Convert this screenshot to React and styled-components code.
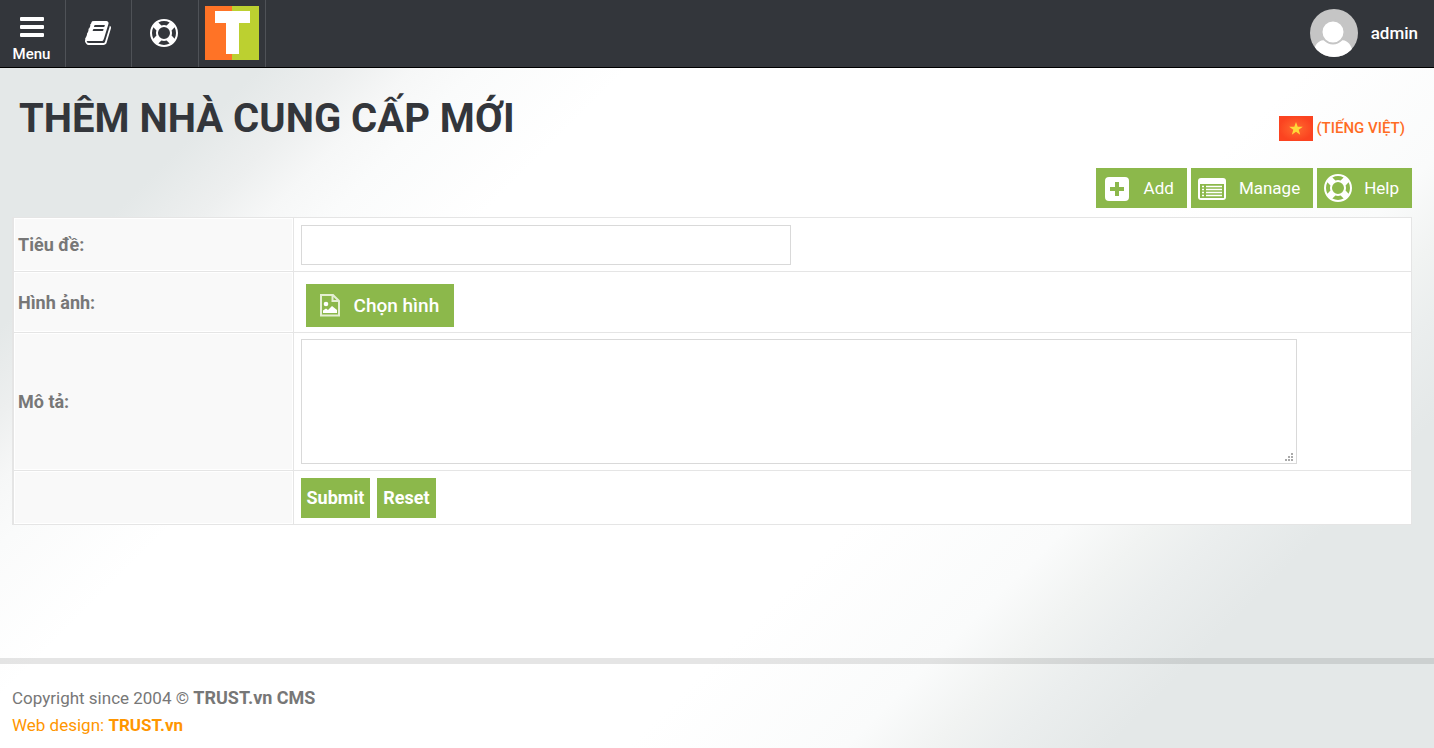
import styled, { createGlobalStyle } from 'styled-components';

const GlobalStyle = createGlobalStyle`
	* {
		box-sizing: border-box;
	}

	body {
		margin: 0;
		min-height: 100vh;
		font-family: Roboto, 'Liberation Sans', sans-serif;
		font-size: 17px;
		color: #777;
		background: linear-gradient(
			135deg,
			#e4e8e8 0%,
			#e4e8e8 15%,
			#edefef 19%,
			#f6f7f7 22%,
			#fafbfb 25%,
			#fff 32%,
			#fff 63%,
			#fafbfb 73%,
			#f1f3f2 77%,
			#ebeeee 80%,
			#e4e8e8 85%,
			#e4e8e8 100%
		);
	}
`;

const Page = styled.div`
	display: flex;
	flex-direction: column;
	min-height: 100vh;
`;

const TopBar = styled.header`
	display: flex;
	justify-content: space-between;
	height: 68px;
	background: #33363b;
	border-bottom: 1px solid #000;
`;

const Nav = styled.nav`
	display: flex;
`;

const NavLink = styled.a`
	display: flex;
	flex-direction: column;
	align-items: center;
	justify-content: ${({ $bottom }) => ($bottom ? 'flex-end' : 'center')};
	gap: 8px;
	width: ${({ $width = 67 }) => $width}px;
	padding: 0 2px ${({ $bottom }) => ($bottom ? 4 : 1)}px 0;
	border-right: 1px solid #4f5257;
	font-size: 15px;
	font-weight: 500;
	line-height: 18px;
	color: #fff;
	text-decoration: none;
`;

const LogoLink = styled(NavLink)`
	padding-right: 0;
`;

const Account = styled.a`
	display: flex;
	align-items: center;
	gap: 13px;
	padding: 0 16px 1px 0;
	font-weight: 500;
	color: #fff;
	text-decoration: none;
`;

const Main = styled.main`
	flex: 1;
	padding: 25px 22px 0 12px;
`;

const Heading = styled.div`
	display: flex;
	justify-content: space-between;
	align-items: center;
	height: 52px;
	padding: 0 7px;
`;

const Title = styled.h1`
	margin: 0;
	font-size: 40px;
	font-weight: 700;
	line-height: 52px;
	color: #33363b;
	text-transform: uppercase;
`;

const Language = styled.a`
	display: flex;
	align-items: center;
	gap: 3px;
	padding-top: 18px;
	font-size: 15px;
	font-weight: 500;
	line-height: 20px;
	color: #ff6c24;
	text-decoration: none;
`;

const Toolbar = styled.div`
	display: flex;
	justify-content: flex-end;
	gap: 4px;
	margin: 23px 0 9px;
`;

const ToolLink = styled.a`
	display: flex;
	align-items: center;
	gap: 12px;
	height: 40px;
	padding: 0 13px 0 7px;
	background: #8cb84b;
	color: #fff;
	text-decoration: none;
`;

const FormTable = styled.table`
	width: 100%;
	border-collapse: collapse;
	border: 1px solid #e5e5e5;
	background: #fff;
`;

const LabelCell = styled.th`
	width: 280px;
	padding: 0 4px;
	border: 1px solid #e5e5e5;
	border-left-width: 2px;
	background: #f9f9f9;
	box-shadow: inset 0 0 0 1px #fff;
	font-size: 18px;
	font-weight: 700;
	text-align: left;
`;

const FieldCell = styled.td`
	height: ${({ $height }) => $height}px;
	padding: ${({ $padding = '6px 3px 6px 7px' }) => $padding};
	border: 1px solid #e5e5e5;
`;

const TextInput = styled.input`
	display: block;
	width: 490px;
	max-width: 100%;
	height: 40px;
	padding: 4px 8px;
	border: 1px solid #d9d9d9;
	font: inherit;
`;

const TextArea = styled.textarea`
	display: block;
	width: 90%;
	height: 125px;
	padding: 4px 8px;
	border: 1px solid #d9d9d9;
	font: inherit;

	&::-webkit-resizer {
		background: url("data:image/svg+xml,%3Csvg xmlns='http://www.w3.org/2000/svg' width='15' height='15'%3E%3Cpath fill='%23aaa' d='M4 11h2v2H4zM7 11h2v2H7zM10 11h2v2h-2zM7 8h2v2H7zM10 8h2v2h-2zM10 5h2v2h-2z'/%3E%3C/svg%3E")
			no-repeat right bottom;
	}
`;

const ChooseButton = styled.button`
	display: flex;
	align-items: center;
	gap: 12px;
	height: 43px;
	padding: 0 15px 0 13px;
	border: 0;
	background: #8cb84b;
	font: 500 19px Roboto, sans-serif;
	color: #fff;
`;

const Actions = styled.div`
	display: flex;
	gap: 7px;
`;

const ActionButton = styled.button`
	height: 40px;
	padding: 0 6px;
	border: 0;
	background: #8cb84b;
	font: 700 18px Roboto, sans-serif;
	color: #fff;
`;

const Footer = styled.footer`
	padding: 20px 12px 9px;
	border-top: 6px solid rgba(0, 0, 0, 0.1);
	line-height: 27px;
`;

const FooterText = styled.p`
	margin: 0;
`;

const SiteName = styled.b`
	font-size: 18px;
`;

const DesignLink = styled.a`
	color: #ff9600;
	text-decoration: none;
`;

const BarsIcon = () => (
	<svg width="24" height="20" viewBox="0 0 24 20" aria-hidden="true">
		<g fill="#fff">
			<rect width="24" height="4" rx="1" />
			<rect y="8" width="24" height="4" rx="1" />
			<rect y="16" width="24" height="4" rx="1" />
		</g>
	</svg>
);

const BookIcon = () => (
	<svg width="26" height="28" viewBox="0 0 1664 1792" fill="#fff" aria-hidden="true">
		<path d="M1639 478q40 57 18 129l-275 906q-19 64-76.5 107.5t-122.5 43.5h-923q-77 0-148.5-53.5t-99.5-131.5q-24-67-2-127 0-4 3-27t4-37q1-8-3-21.5t-3-19.5q2-11 8-21t16.5-23.5 16.5-23.5q23-38 45-91.5t30-91.5q3-10 .5-30t-.5-28q3-11 17-28t17-23q21-36 42-92t25-90q1-9-2.5-32t.5-28q4-13 22-30.5t22-22.5q19-26 42.5-84.5t27.5-96.5q1-8-3-25.5t-2-26.5q2-8 9-18t18-23 17-21q8-12 16.5-30.5t15-35 16-36 19.5-32 26.5-23.5 36-11.5 47.5 5.5l-1 3q38-9 51-9h761q74 0 114 56t18 130l-274 906q-36 119-71.5 153.5t-128.5 34.5h-869q-27 0-38 15-11 16-1 43 24 70 144 70h923q29 0 56-15.5t35-41.5l300-987q7-22 5-57 38 15 59 43zm-1064 2q-4 13 2 22.5t20 9.5h608q13 0 25.5-9.5t16.5-22.5l21-64q4-13-2-22.5t-20-9.5h-608q-13 0-25.5 9.5t-16.5 22.5zm-83 256q-4 13 2 22.5t20 9.5h608q13 0 25.5-9.5t16.5-22.5l21-64q4-13-2-22.5t-20-9.5h-608q-13 0-25.5 9.5t-16.5 22.5z" />
	</svg>
);

const LifeRing = ({ size }) => (
	<svg width={size} height={size} viewBox="0 0 1792 1792" fill="#fff" aria-hidden="true">
		<path d="M896 0q182 0 348 71t286 191 191 286 71 348-71 348-191 286-286 191-348 71-348-71-286-191-191-286-71-348 71-348 191-286 286-191 348-71zm0 128q-190 0-361 90l194 194q82-28 167-28t167 28l194-194q-171-90-361-90zm-678 1129l194-194q-28-82-28-167t28-167l-194-194q-90 171-90 361t90 361zm678 407q190 0 361-90l-194-194q-82 28-167 28t-167-28l-194 194q171 90 361 90zm0-384q159 0 271.5-112.5t112.5-271.5-112.5-271.5-271.5-112.5-271.5 112.5-112.5 271.5 112.5 271.5 271.5 112.5zm484-217l194 194q90-171 90-361t-90-361l-194 194q28 82 28 167t-28 167z" />
	</svg>
);

const Logo = () => (
	<svg width="54" height="54" viewBox="0 0 54 54" role="img" aria-label="Trust">
		<path fill="#ff7326" d="M0 0h27v54H0z" />
		<path fill="#bcd030" d="M27 0h27v54H27z" />
		<path fill="#fff" d="M10 5h35v12H34v31H21V17H10z" />
	</svg>
);

const Avatar = () => (
	<svg width="48" height="48" viewBox="0 0 48 48" aria-hidden="true">
		<clipPath id="avatarClip">
			<circle cx="24" cy="24" r="24" />
		</clipPath>
		<g clipPath="url(#avatarClip)">
			<path fill="#c5c5c5" d="M0 0h48v48H0z" />
			<path fill="#fff" d="M4 48v-8c2-6 6-9 11-9h16c5 0 9 3 11 9v8z" />
			<circle cx="23" cy="23" r="11.5" fill="#fff" stroke="#c5c5c5" strokeWidth="2" />
		</g>
	</svg>
);

const Flag = () => (
	<svg width="34" height="25" viewBox="0 0 34 25" aria-hidden="true">
		<defs>
			<radialGradient id="flagRed">
				<stop offset="0" stopColor="#ff6a30" />
				<stop offset="1" stopColor="#fb4320" />
			</radialGradient>
		</defs>
		<path fill="url(#flagRed)" d="M0 0h34v25H0z" />
		<path
			fill="#ffd938"
			d="M17 6l1.7 4.8h5.1l-4.1 3 1.5 4.9-4.2-3-4.2 3 1.5-4.9-4.1-3h5.1z"
		/>
	</svg>
);

const AddIcon = () => (
	<svg width="29" height="28" viewBox="0 0 29 28" aria-hidden="true">
		<rect x="2" y="3" width="24" height="24" rx="4" fill="#fff" />
		<path d="M14 8v14M7 15h14" stroke="#8cb84b" strokeWidth="4" />
	</svg>
);

const ManageIcon = () => (
	<svg width="29" height="28" viewBox="0 0 29 28" aria-hidden="true">
		<rect y="4" width="28" height="22" rx="3" fill="#fff" />
		<path fill="#8cb84b" d="M2 10h24v14H2z" />
		<path
			d="M4 12.5h2M8 12.5h16M4 15.5h2M8 15.5h16M4 18.5h2M8 18.5h16M4 21.5h2M8 21.5h16"
			stroke="#fff"
			strokeWidth="1.6"
		/>
	</svg>
);

const ImageIcon = () => (
	<svg width="23" height="26" viewBox="0 0 23 26" aria-hidden="true">
		<path
			d="M2 2h12l6 6v14.5H2zM13.5 2v6H20"
			fill="none"
			stroke="#e4efd2"
			strokeWidth="2"
		/>
		<circle cx="7" cy="11" r="2.3" fill="#fff" />
		<path fill="#fff" d="M4 20v-2.5l3-2 2 1.5 4-4 5 4v3z" />
	</svg>
);

const App = () => {
	return (
		<>
			<GlobalStyle />
			<Page>
				<TopBar>
					<Nav>
						<NavLink href="#menu" $width={66} $bottom>
							<BarsIcon />
							<span>Menu</span>
						</NavLink>
						<NavLink href="#docs" $width={66} aria-label="Docs">
							<BookIcon />
						</NavLink>
						<NavLink href="#help" aria-label="Help">
							<LifeRing size={28} />
						</NavLink>
						<LogoLink href="#home" aria-label="Trust">
							<Logo />
						</LogoLink>
					</Nav>
					<Account href="#account">
						<Avatar />
						admin
					</Account>
				</TopBar>
				<Main>
					<Heading>
						<Title>Thêm nhà cung cấp mới</Title>
						<Language href="#vi">
							<Flag />
							(TIẾNG VIỆT)
						</Language>
					</Heading>
					<Toolbar>
						<ToolLink href="#add">
							<AddIcon />
							Add
						</ToolLink>
						<ToolLink href="#manage">
							<ManageIcon />
							Manage
						</ToolLink>
						<ToolLink href="#help">
							<LifeRing size={28} />
							Help
						</ToolLink>
					</Toolbar>
					<form>
						<FormTable>
							<tbody>
								<tr>
									<LabelCell scope="row">
										<label htmlFor="title">Tiêu đề:</label>
									</LabelCell>
									<FieldCell $height={54}>
										<TextInput id="title" type="text" />
									</FieldCell>
								</tr>
								<tr>
									<LabelCell scope="row">
										<label htmlFor="image">Hình ảnh:</label>
									</LabelCell>
									<FieldCell $height={61} $padding="12px 12px 5px">
										<ChooseButton id="image" type="button">
											<ImageIcon />
											Chọn hình
										</ChooseButton>
									</FieldCell>
								</tr>
								<tr>
									<LabelCell scope="row">
										<label htmlFor="description">Mô tả:</label>
									</LabelCell>
									<FieldCell $height={138}>
										<TextArea id="description" />
									</FieldCell>
								</tr>
								<tr>
									<LabelCell scope="row" />
									<FieldCell $height={54}>
										<Actions>
											<ActionButton type="submit">Submit</ActionButton>
											<ActionButton type="reset">Reset</ActionButton>
										</Actions>
									</FieldCell>
								</tr>
							</tbody>
						</FormTable>
					</form>
				</Main>
				<Footer>
					<FooterText>
						Copyright since 2004 © <SiteName>TRUST.vn CMS</SiteName>
					</FooterText>
					<DesignLink href="#trust">
						Web design: <b>TRUST.vn</b>
					</DesignLink>
				</Footer>
			</Page>
		</>
	);
};

export default App;
